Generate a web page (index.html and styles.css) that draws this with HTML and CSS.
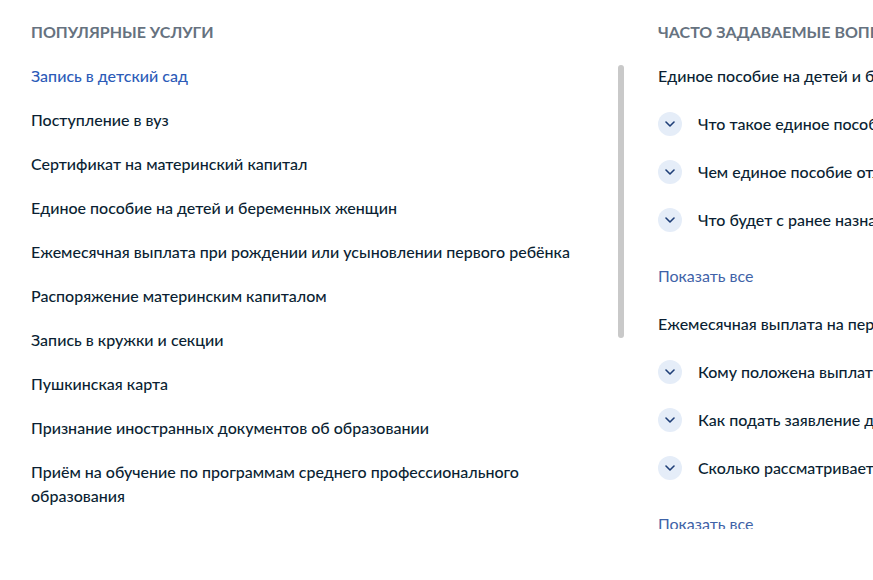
FILE: index.html
```html
<!DOCTYPE html>
<html lang="ru">
<head>
<meta charset="utf-8">
<title>Популярные услуги</title>
<link rel="stylesheet" href="styles.css">
</head>
<body>
<div class="page">
  <section class="services">
    <h2 class="section-title">Популярные услуги</h2>
    <ul class="service-list">
      <li><a class="service-link active" href="#">Запись в детский сад</a></li>
      <li><a class="service-link" href="#">Поступление в вуз</a></li>
      <li><a class="service-link" href="#">Сертификат на материнский капитал</a></li>
      <li><a class="service-link" href="#">Единое пособие на детей и беременных женщин</a></li>
      <li><a class="service-link" href="#">Ежемесячная выплата при рождении или усыновлении первого ребёнка</a></li>
      <li><a class="service-link" href="#">Распоряжение материнским капиталом</a></li>
      <li><a class="service-link" href="#">Запись в кружки и секции</a></li>
      <li><a class="service-link" href="#">Пушкинская карта</a></li>
      <li><a class="service-link" href="#">Признание иностранных документов об образовании</a></li>
      <li><a class="service-link" href="#">Приём на обучение по программам среднего профессионального образования</a></li>
    </ul>
  </section>
  <div class="scroll-track"><div class="scroll-thumb"></div></div>
  <section class="faq">
    <h2 class="section-title">Часто задаваемые вопросы</h2>
    <div class="faq-scroll">
      <div class="faq-group">
        <h3 class="faq-topic">Единое пособие на детей и беременных женщин</h3>
        <ul class="faq-list">
          <li class="faq-item"><span class="chev"><svg width="10" height="6" viewBox="0 0 10 6"><path d="M1 1l4 4 4-4" fill="none" stroke="#1f3f78" stroke-width="1.6" stroke-linecap="round" stroke-linejoin="round"/></svg></span>Что такое единое пособие на детей и беременных женщин</li>
          <li class="faq-item"><span class="chev"><svg width="10" height="6" viewBox="0 0 10 6"><path d="M1 1l4 4 4-4" fill="none" stroke="#1f3f78" stroke-width="1.6" stroke-linecap="round" stroke-linejoin="round"/></svg></span>Чем единое пособие отличается от других выплат</li>
          <li class="faq-item"><span class="chev"><svg width="10" height="6" viewBox="0 0 10 6"><path d="M1 1l4 4 4-4" fill="none" stroke="#1f3f78" stroke-width="1.6" stroke-linecap="round" stroke-linejoin="round"/></svg></span>Что будет с ранее назначенными выплатами</li>
        </ul>
        <a class="show-all" href="#">Показать все</a>
      </div>
      <div class="faq-group">
        <h3 class="faq-topic">Ежемесячная выплата на первого ребёнка</h3>
        <ul class="faq-list">
          <li class="faq-item"><span class="chev"><svg width="10" height="6" viewBox="0 0 10 6"><path d="M1 1l4 4 4-4" fill="none" stroke="#1f3f78" stroke-width="1.6" stroke-linecap="round" stroke-linejoin="round"/></svg></span>Кому положена выплата</li>
          <li class="faq-item"><span class="chev"><svg width="10" height="6" viewBox="0 0 10 6"><path d="M1 1l4 4 4-4" fill="none" stroke="#1f3f78" stroke-width="1.6" stroke-linecap="round" stroke-linejoin="round"/></svg></span>Как подать заявление для выплаты</li>
          <li class="faq-item"><span class="chev"><svg width="10" height="6" viewBox="0 0 10 6"><path d="M1 1l4 4 4-4" fill="none" stroke="#1f3f78" stroke-width="1.6" stroke-linecap="round" stroke-linejoin="round"/></svg></span>Сколько рассматривается заявление</li>
        </ul>
        <a class="show-all" href="#">Показать все</a>
      </div>
    </div>
  </section>
</div>
</body>
</html>
```
FILE: styles.css
```css
* { box-sizing: border-box; }
html, body {
  margin: 0;
  padding: 0;
  background: #ffffff;
  overflow: hidden;
}
body {
  font-family: Lato, "Noto Sans", "Liberation Sans", sans-serif;
  font-size: 16px;
  line-height: 24px;
  color: #0b1f33;
}
.page {
  display: flex;
  align-items: flex-start;
  padding: 20px 0 0 31px;
  width: 1200px;
  height: 580px;
}
.section-title {
  margin: 0;
  font-size: 16px;
  line-height: 24px;
  font-weight: 700;
  text-transform: uppercase;
  color: #66727f;
  white-space: nowrap;
}
.services {
  width: 560px;
  flex: none;
}
.service-list {
  list-style: none;
  margin: 20px 0 0;
  padding: 0;
  display: flex;
  flex-direction: column;
  gap: 20px;
}
.service-link {
  color: #0b1f33;
  text-decoration: none;
  font-weight: 500;
}
.service-link.active { color: #2c5bb8; }
.scroll-track {
  flex: none;
  margin: 45px 0 0 27px;
  width: 6px;
}
.scroll-thumb {
  height: 273px;
  border-radius: 3px;
  background: #c9c9c9;
}
.faq {
  flex: none;
  margin-left: 34px;
  width: 540px;
  white-space: nowrap;
}
.faq-scroll {
  margin-top: 20px;
  height: 465px;
  overflow: hidden;
}
.faq-group + .faq-group { margin-top: 24px; }
.faq-topic {
  margin: 0;
  font-size: 16px;
  line-height: 24px;
  font-weight: 500;
}
.faq-list {
  list-style: none;
  margin: 24px 0 0;
  padding: 0;
  display: flex;
  flex-direction: column;
  gap: 24px;
}
.faq-item {
  display: flex;
  align-items: center;
  gap: 16px;
  font-weight: 500;
}
.chev {
  flex: none;
  width: 24px;
  height: 24px;
  border-radius: 50%;
  background: #e5edf8;
  display: flex;
  align-items: center;
  justify-content: center;
}
.show-all {
  display: block;
  margin-top: 32px;
  color: #3f63a8;
  text-decoration: none;
  font-weight: 400;
}
```
